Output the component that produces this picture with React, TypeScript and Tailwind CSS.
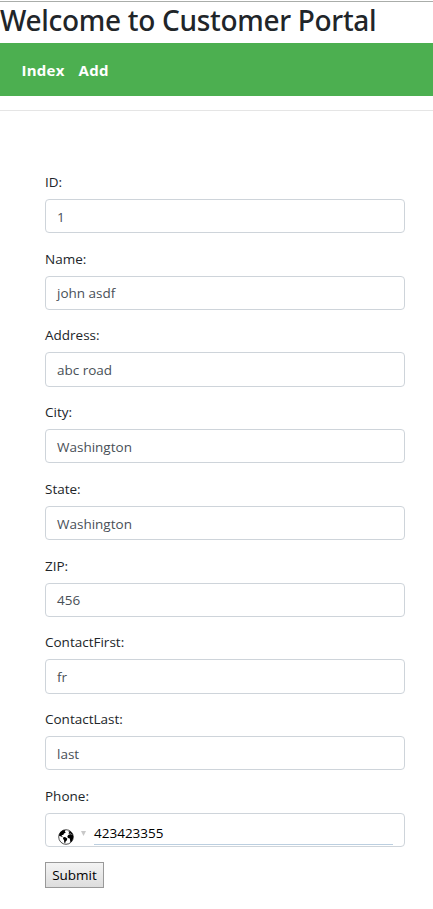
type Field = { label: string; value: string };

const fields: Field[] = [
  { label: 'ID:', value: '1' },
  { label: 'Name:', value: 'john asdf' },
  { label: 'Address:', value: 'abc road' },
  { label: 'City:', value: 'Washington' },
  { label: 'State:', value: 'Washington' },
  { label: 'ZIP:', value: '456' },
  { label: 'ContactFirst:', value: 'fr' },
  { label: 'ContactLast:', value: 'last' },
];

function Globe() {
  return (
    <svg width="16" height="16" viewBox="0 0 16 16" className="shrink-0">
      <circle cx="8" cy="8" r="7.3" fill="#fff" stroke="#222" strokeWidth="0.8" />
      <path
        fill="#000"
        d="M.8 6.500 2.300 3 5 1.200 7.500 1 6.800 2.500 7.800 3.500 6 4.600 5.200 6 3.900 6 3.600 7.200 5 7.800 4.300 8.300 2.600 7.300zM5.300 8.200 7 7.900 9.300 9.500 8.900 11.300 7.600 12.500 7.200 14.300 6.200 13.500 6.100 11.300 5 9.800zM10.200 2.500 12.200 2.300 14.200 4.300 15.300 7.200 15 10 13.500 12.700 12.400 13.200 12 10.800 11.800 9.400 10 9 9.300 7.500 10.200 5.900 11.500 5.500 10.500 4.800 11.300 3.700z"
      />
      <path fill="none" stroke="#fff" strokeWidth="0.6" d="M11 5.200 12.500 4.800 13.600 5.600" />
    </svg>
  );
}

export default function App() {
  return (
    <div className="h-[909px] w-[433px] overflow-hidden border-t border-t-white bg-white font-['Open_Sans','Noto_Sans',sans-serif] text-[#212529]">
      <div className="h-px bg-[#aaadaa]" />
      <h1 className="h-[41px] whitespace-nowrap font-['Noto_Sans',sans-serif] text-[28px] font-medium leading-[36px] tracking-[-0.3px]">
        Welcome to Customer Portal
      </h1>
      <nav className="flex h-[53px] items-center gap-[14px] bg-[#4caf50] pl-[21.5px] pt-[2px] text-[15px] font-bold tracking-[0.25px] text-white">
        <a>Index</a>
        <a>Add</a>
      </nav>
      <hr className="mt-[14px] border-t border-[#e5e5e5]" />
      <form className="ml-[45px] mt-[60.75px] w-[360px] text-[13.5px]">
        {fields.map((f) => (
          <div key={f.label} className="h-[76.75px]">
            <label className="block h-[27px] leading-[20px]">{f.label}</label>
            <div className="flex h-[34.25px] items-center rounded-[4px] border border-[#ced4da] pl-[11px] pt-[1.75px] text-[#495057]">
              {f.value}
            </div>
          </div>
        ))}
        <label className="block h-[27px] leading-[20px]">Phone:</label>
        <div className="flex h-[34.25px] rounded-[4px] border border-[#ced4da] pl-[12px] pr-[11px]">
          <div className="pt-[15px]">
            <Globe />
          </div>
          <svg width="5" height="5" viewBox="0 0 5 5" className="ml-[7px] mt-[17px]">
            <path d="M0 0h5L2.500 5z" fill="#c8c8c8" />
          </svg>
          <div className="ml-[8px] h-[31px] flex-1 border-b border-[#bccfe0] pt-[9px] leading-[20px] text-black">
            423423355
          </div>
        </div>
        <button
          type="button"
          className="mt-[15px] flex h-[26px] w-[59px] items-center justify-center border border-[#999] bg-linear-to-b from-[#f4f4f4] to-[#dddddd] text-[13.5px] text-black"
        >
          Submit
        </button>
      </form>
    </div>
  );
}
